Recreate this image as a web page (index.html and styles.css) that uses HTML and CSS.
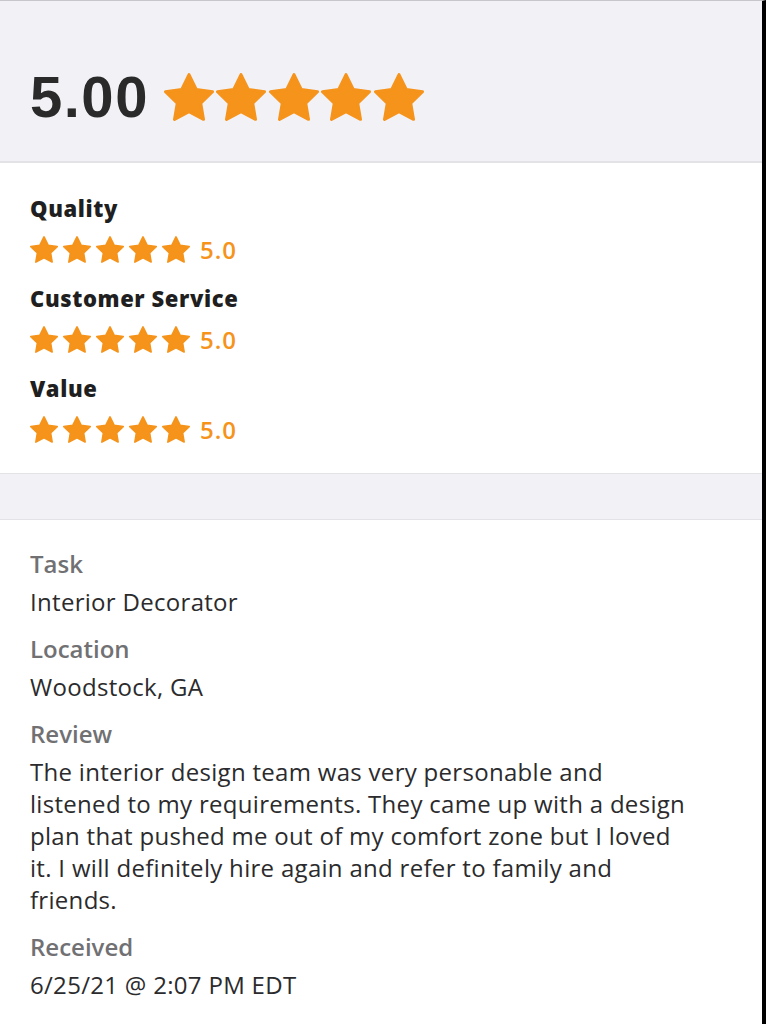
FILE: index.html
```html
<!DOCTYPE html>
<html lang="en">
<head>
<meta charset="utf-8">
<title>Review</title>
<link rel="stylesheet" href="styles.css">
</head>
<body>
<svg width="0" height="0" class="defs" aria-hidden="true">
  <defs>
    <symbol id="star" viewBox="1.88 1.9 20.24 19.3">
      <path d="M12 2.5l2.94 5.96 6.58.96-4.76 4.64 1.12 6.55L12 17.52l-5.88 3.09 1.12-6.55L2.48 9.42l6.58-.96z" fill="#f5931a" stroke="#f5931a" stroke-width="1.2" stroke-linejoin="round"/>
    </symbol>
  </defs>
</svg>
<div class="page">
  <header class="summary">
    <span class="score">5.00</span>
    <span class="stars stars-lg">
      <svg><use href="#star"/></svg><svg><use href="#star"/></svg><svg><use href="#star"/></svg><svg><use href="#star"/></svg><svg><use href="#star"/></svg>
    </span>
  </header>

  <section class="ratings">
    <div class="rating">
      <div class="rating-name">Quality</div>
      <div class="rating-row">
        <span class="stars stars-sm"><svg><use href="#star"/></svg><svg><use href="#star"/></svg><svg><use href="#star"/></svg><svg><use href="#star"/></svg><svg><use href="#star"/></svg></span>
        <span class="rating-value">5.0</span>
      </div>
    </div>
    <div class="rating">
      <div class="rating-name">Customer Service</div>
      <div class="rating-row">
        <span class="stars stars-sm"><svg><use href="#star"/></svg><svg><use href="#star"/></svg><svg><use href="#star"/></svg><svg><use href="#star"/></svg><svg><use href="#star"/></svg></span>
        <span class="rating-value">5.0</span>
      </div>
    </div>
    <div class="rating">
      <div class="rating-name">Value</div>
      <div class="rating-row">
        <span class="stars stars-sm"><svg><use href="#star"/></svg><svg><use href="#star"/></svg><svg><use href="#star"/></svg><svg><use href="#star"/></svg><svg><use href="#star"/></svg></span>
        <span class="rating-value">5.0</span>
      </div>
    </div>
  </section>

  <div class="band"></div>

  <section class="details">
    <div class="field">
      <div class="label">Task</div>
      <div class="value">Interior Decorator</div>
    </div>
    <div class="field">
      <div class="label">Location</div>
      <div class="value">Woodstock, GA</div>
    </div>
    <div class="field">
      <div class="label">Review</div>
      <div class="value review-text">The interior design team was very personable and listened to my requirements. They came up with a design plan that pushed me out of my comfort zone but I loved it. I will definitely hire again and refer to family and friends.</div>
    </div>
    <div class="field">
      <div class="label">Received</div>
      <div class="value">6/25/21 @ 2:07 PM EDT</div>
    </div>
  </section>
</div>
</body>
</html>
```

FILE: styles.css
```css
* { box-sizing: border-box; }

html, body {
  margin: 0;
  padding: 0;
  background: #ffffff;
}

body {
  font-family: "Open Sans", "Noto Sans", sans-serif;
  color: #2b2b2d;
}

.defs {
  position: absolute;
  width: 0;
  height: 0;
  overflow: hidden;
}

.page {
  width: 766px;
  min-height: 1024px;
  border-top: 1px solid #c6c6cb;
  border-right: 4px solid #000000;
  display: flex;
  flex-direction: column;
}

.summary {
  height: 162px;
  background: #f2f1f6;
  border-bottom: 2px solid #e3e3e7;
  display: flex;
  align-items: center;
  padding: 32px 0 0 30px;
}

.score {
  font-family: "Liberation Sans", Arial, sans-serif;
  font-weight: 700;
  font-size: 58px;
  line-height: 58px;
  color: #2a2a2a;
  letter-spacing: 1.5px;
}

.stars {
  display: flex;
}

.stars svg {
  display: block;
  flex: none;
}

.stars-lg {
  margin-left: 15px;
  gap: 2.5px;
}

.stars-lg svg {
  width: 50px;
  height: 48px;
}

.stars-sm {
  gap: 5px;
}

.stars-sm svg {
  width: 28px;
  height: 27px;
}

.ratings {
  padding: 32px 30px 30px;
  border-bottom: 1px solid #e3e3e7;
}

.rating + .rating {
  margin-top: 22px;
}

.rating-name {
  font-weight: 800;
  font-size: 22px;
  line-height: 26px;
  letter-spacing: 0.6px;
  color: #1f1f21;
}

.rating-row {
  margin-top: 15px;
  display: flex;
  align-items: center;
  height: 27px;
}

.rating-value {
  margin-left: 10px;
  font-size: 24px;
  font-weight: 600;
  line-height: 27px;
  letter-spacing: 1px;
  color: #f5931a;
}

.band {
  height: 46px;
  background: #f2f1f6;
  border-bottom: 1px solid #e3e3e7;
}

.details {
  padding: 28px 30px 0;
}

.field + .field {
  margin-top: 15px;
}

.label {
  font-size: 24px;
  font-weight: 600;
  line-height: 32px;
  color: #717174;
  margin-bottom: 6px;
}

.value {
  font-size: 24px;
  line-height: 32px;
  letter-spacing: 0.3px;
  color: #2b2b2d;
}

.review-text {
  max-width: 668px;
}
```
